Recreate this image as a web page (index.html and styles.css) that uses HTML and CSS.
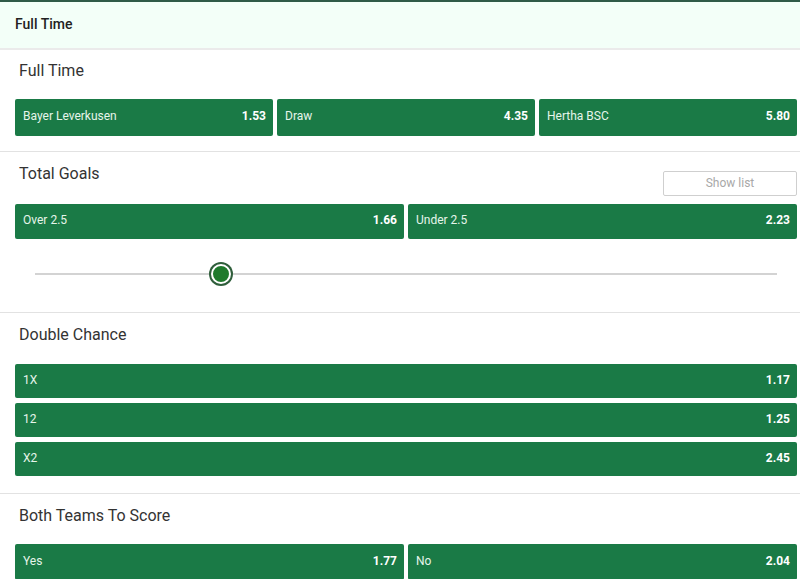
FILE: index.html
```html
<!DOCTYPE html>
<html>
<head>
<meta charset="utf-8">
<link rel="stylesheet" href="styles.css">
</head>
<body>
<div class="topbar">Full Time</div>

<section class="market m1">
  <div class="head"><div class="title">Full Time</div></div>
  <div class="row three">
    <div class="btn"><span>Bayer Leverkusen</span><b>1.53</b></div>
    <div class="btn"><span>Draw</span><b>4.35</b></div>
    <div class="btn"><span>Hertha BSC</span><b>5.80</b></div>
  </div>
</section>

<section class="market m2">
  <div class="head"><div class="title">Total Goals</div><div class="showlist">Show list</div></div>
  <div class="row two">
    <div class="btn"><span>Over 2.5</span><b>1.66</b></div>
    <div class="btn"><span>Under 2.5</span><b>2.23</b></div>
  </div>
  <div class="slider">
    <div class="track"><div class="thumb"></div></div>
  </div>
</section>

<section class="market m3">
  <div class="head"><div class="title">Double Chance</div></div>
  <div class="col">
    <div class="btn"><span>1X</span><b>1.17</b></div>
    <div class="btn"><span>12</span><b>1.25</b></div>
    <div class="btn"><span>X2</span><b>2.45</b></div>
  </div>
</section>

<section class="market m4">
  <div class="head"><div class="title">Both Teams To Score</div></div>
  <div class="row two">
    <div class="btn"><span>Yes</span><b>1.77</b></div>
    <div class="btn"><span>No</span><b>2.04</b></div>
  </div>
</section>
</body>
</html>
```
FILE: styles.css
```css
html, body {
  margin: 0;
  padding: 0;
  background: #ffffff;
  font-family: Roboto, "Liberation Sans", Arial, sans-serif;
  overflow: hidden;
}
.topbar {
  border-top: 2px solid #2f5b48;
  border-bottom: 2px solid #ebebeb;
  background: #f3fff8;
  height: 46px;
  line-height: 45px;
  padding-left: 15px;
  font-size: 14px;
  font-weight: 500;
  color: #222;
}
.market {
  padding: 10px 3px 0 15px;
  border-bottom: 1px solid #e2e2e2;
}
.head {
  display: flex;
  justify-content: space-between;
  align-items: flex-start;
}
.title {
  padding-left: 4px;
  font-size: 16px;
  line-height: 22px;
  color: #333;
}
.showlist {
  margin-top: 9px;
  width: 132px;
  height: 23px;
  line-height: 23px;
  border: 1px solid #cfcfcf;
  border-radius: 2px;
  text-align: center;
  font-size: 12px;
  color: #a8a8a8;
}
.row {
  display: grid;
  gap: 4px;
}
.three { grid-template-columns: 1fr 1fr 1fr; }
.two { grid-template-columns: 1fr 1fr; }
.col {
  display: flex;
  flex-direction: column;
  gap: 5px;
}
.btn {
  display: flex;
  justify-content: space-between;
  align-items: center;
  background: #1a7a46;
  border-radius: 2px;
  height: 35px;
  padding: 0 7px 3px 8px;
  box-sizing: border-box;
  font-size: 12px;
  color: #e6f5ea;
}
.btn b {
  font-weight: 700;
  color: #ffffff;
}
.m1 { padding-bottom: 15px; }
.m1 .head { margin-bottom: 17px; }
.m1 .btn { height: 37px; }
.m2 .title { padding-top: 1px; }
.m2 .head { height: 33px; margin-bottom: 9px; }
.m2 .btn { height: 35px; }
.slider {
  height: 73px;
  padding: 0 20px 0 20px;
}
.track {
  position: relative;
  top: 34px;
  height: 2px;
  background: #d3d3d3;
}
.thumb {
  position: absolute;
  left: 176px;
  top: -9px;
  width: 16px;
  height: 16px;
  border-radius: 50%;
  background: #1f7a2c;
  border: 2px solid #ffffff;
  box-shadow: 0 0 0 2px #2f5e3b;
}
.m3 { padding-bottom: 17px; }
.m3 .title { padding-top: 1px; }
.m3 .head { margin-bottom: 18px; }
.m3 .btn { height: 34px; }
.m4 { border-bottom: none; padding-top: 10px; }
.m4 .title { padding-top: 1px; }
.m4 .head { margin-bottom: 17px; }
.m4 .btn { height: 36px; }
```
